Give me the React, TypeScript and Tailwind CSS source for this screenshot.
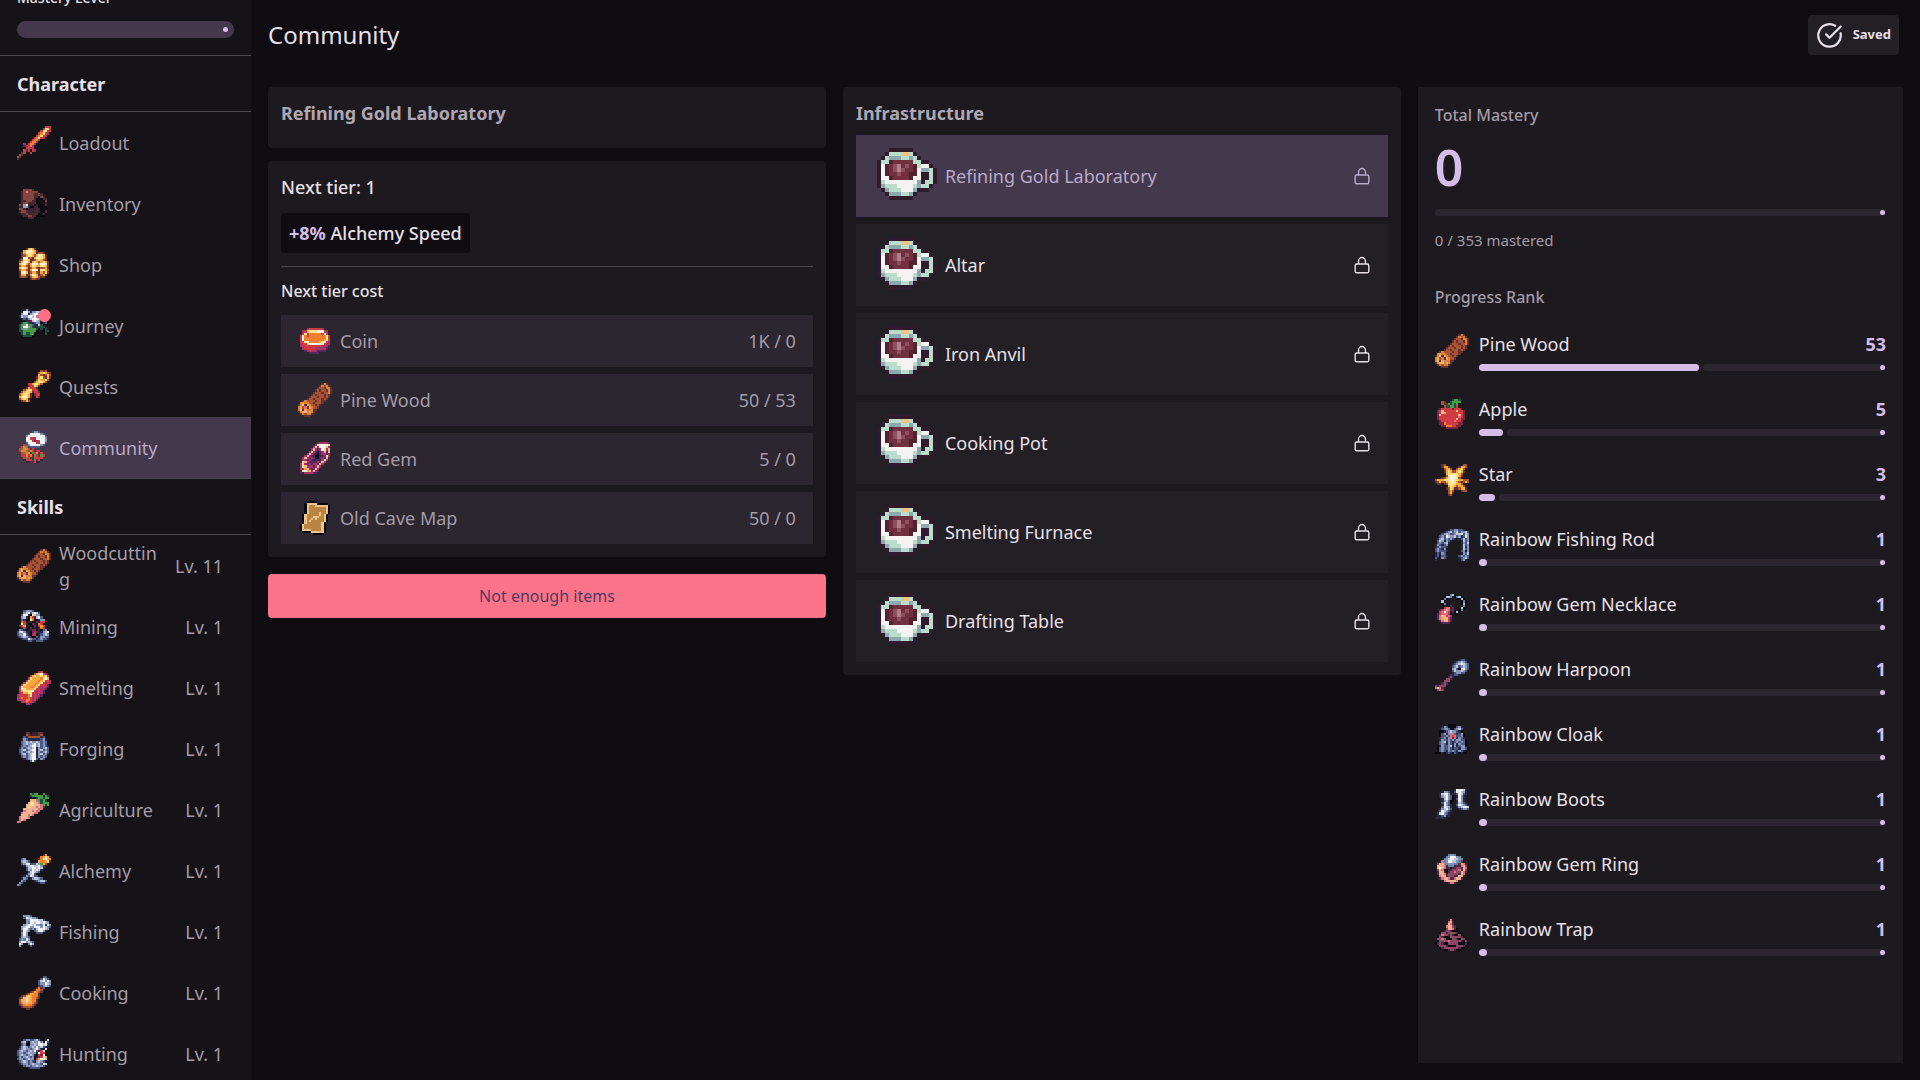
import React, { useState } from "react";
import { CircleCheckBig } from "lucide-react";
import { clsx } from "clsx";

// One character per pixel in the sprites below, "." is transparent
const PALETTE: Record<string, string> = {
  k: "#0b0812", d: "#3a2234", n: "#252a48", b: "#4b5884", s: "#8794ba", l: "#bcc6dd", w: "#f4f3f2",
  r: "#d23a41", R: "#7f2342", o: "#f08030", O: "#f6a93f", y: "#fde487", p: "#d9707f", P: "#f1b292",
  m: "#683034", t: "#a65530", T: "#d68338", g: "#479d41", G: "#1d5040", v: "#54265c", V: "#a5336b",
  c: "#a3cbd4", C: "#5b88a6", e: "#ecc588", E: "#b98540", a: "#b9dccb", A: "#8ea8b0", M: "#301b2c",
  q: "#70303f", Q: "#53222f", x: "#8f4f5e", X: "#b07f8f", u: "#8a4663", U: "#4d2844", h: "#84453f",
  H: "#4b2831",
};

const SPRITES: Record<string, string[]> = {
  sword: [
    ".............rrV", "............ryyr", "...........ryyrV", "..........royrV.", ".........royrV..", "........royrV...",
    ".......rooV.....", "......rooV......", "...V.rooV.......", "...vVroV........", "....rrVr........", "...tvr.rV.......",
    "..mt..r.........", ".tm.............", "tm..............", "m...............",
  ],
  bag: [
    "", "...hhhhH........", "..Hhphhhhh......", "..HhhhhhHHhH....", "..HhhhhhHHkhH...", "..HhhhhhHk.kHH..",
    "..HHhhhHHk..kh..", ".kHhhHHHHkk..H..", ".hHAwHdHkdkk.H..", ".HdAsnkkHdkk.k..", ".hhHkddddHdk.k..", ".HhhHdddHHd.kH..",
    "..HHhHHHHHk.Hk..", "...HHhhHHkkkk...", ".....HHHk.......",
  ],
  coins: [
    "....mOyOm.......", "...OywwyOm......", "..mOwyyyOmttm...", "..mtOyyOtOwyOm..", "..mwwttmOwyyOm..", ".mtyyOmmtOyOtm..",
    ".tOwwOmOyOtOyOm.", ".OywOtOwwyOwwym.", ".tOOtmOyyOOyyOm.", ".OwyOmtOOtmttOm.", ".tOOtmOwwymyyOt.", ".mywOmtOOtmOtym.",
    ".mOOmmOwyOmtOm..", ".mttm.tOyOtmm...", "......mttmm.....",
  ],
  island: [
    "...nsn..........", "..nwwsnssll.....", "..swwnslwws.....", ".nlsswwlwpn.....", "...bnslwwwlsn...", "....ndRlwlsnnb..",
    "..GggGnnbss.nb..", ".GgswggbnnlG....", ".GgwwsgGnnGGG...", ".GgssggggG.GkG..", ".GGggggggk..kGG.", "..GgGGggk....G..",
    "...GGGGk........",
  ],
  scroll: [
    "...........tmt..", "..........tOyOtm", "..........OtmtOt", ".........mOytmOm", ".........tyOOyt.", "........tOyyOt..",
    ".....rrOyyOt....", ".....mrryOm.....", "....mOrrtm......", "...tOyyrrr......", "..tOyyOmrrm.....", ".tOyyOm.mrr.....",
    ".OywyOm..rm.....", ".tOyOm..........", "..mtOt..........",
  ],
  hall: [
    ".......bssb.....", ".....bwwwwwsb...", "....swwwwwwwwb..", "....wwrrVwwwws..", "....wwwrRVrwws..", "....bwwwwrVwwb..",
    "..mrbswwwwwsb...", ".mrogRbbbbb.....", ".rgoorGrm.......", ".roogrorGrr.....", ".mrgooGgroRrm...", "..rroroRgrRgr...",
    "..mrgrRGrrrrm...", "...nrrrGgRrn....", "....nnRRrnn.....",
  ],
  log: [
    "...........mTm..", "..........mTtTm.", ".........mttmTTm", "........mtmttmTm", ".......mtttmttTm", "......mtmtttmtm.",
    ".....mtttmttmtm.", "....mttmtttmtm..", "..mTttttmttmm...", ".TOTTttmtttm....", "mTPmOTttmtm.....", "TOtpmOTttm......",
    "TPmOpTTmm.......", "mTOPTOTm........", ".mTtTTm.........", "...mmm..........",
  ],
  ore: [
    "...bsssb........", "...slwblwlb.....", "..bwwnkylss.....", "..slnkOrnlwb....", "..bnkkyokknss...", "..orkdnkkRnrr...",
    "..yrnkkmnkork...", ".mrOknkkRkrOrn..", ".knrnkRknknork..", ".sbnknnRRknkbs..", "blwsnnkRVRnnslw.", "bsswbnkVrknbsls.",
    "nbslsbnkkbnssbb.", "..nbbwsbbnbsbbn.", "....nbbn.bbbn...",
  ],
  ingot: [
    "..........Vr....", "........rOywrV..", "......rOyOOyOyr.", ".....ryOOOOoywO.", "....ryOOOOoOyrrV", "...ryOOOOoOyrVrV",
    "..ryOOOOoOyrrVv.", ".VyOOOooOyrVrVv.", ".rwyOOOOyrrVVv..", ".rOyyyywrVrVv...", ".VrOOyyrrVrVv...", "VrrrroyVrVVv....",
    "VrorrorVrVv.....", "VVrroorVrv......", "..VrorrVv.......", "....VVv.........",
  ],
  armor: [
    "....mm.dddmm....", "....tmddddmt....", "...bnttttttnb...", "..nsbnnnnnnbsn..", "..bslslsslsbsb..", "..bslsslwslbsb..",
    "..bsbslwwslbsbn.", ".nsbslslwnsbslb.", ".bslbslwwnslbsb.", ".bsbslslwnsbslb.", ".nslbslwwnslbsn.", "..bsbslwwnsbsb..",
    "...nbslwwbnsb...", "......bwb.......",
  ],
  carrot: [
    "......gGgg..g...", "......Gggggg.gG.", ".........GggGgg.", "......PPPpgGgG..", ".....PyyPPpGggg.", "....PPyyPPPpgGg.",
    "....PyPPPpPpG...", "...PPPPPPPpp....", "...pPPPpPpp.....", "..pPPPPPpp......", "..PPPpPp........", ".pPPPp..........",
    ".pPp............", "pp..............",
  ],
  potion: [
    "............mo..", "...........oOyOm", "..bs......moywOo", "..slsb....OooOym", "..bswwbbblsgOt..", "...nslwwllwsm...",
    "....bllwwlwln...", "....blswlwln....", ".....blwlsb.....", "....nslwb.......", "...nsbwlbb......", "..nsb.nsllsb....",
    "..sb....nbsllb..", ".sb.......nbb...", "sb..............",
  ],
  fish: [
    "...sssb.........", "...bwllssb......", "....sswwwwllb...", "....sCwwlwwlwls.", "...slwwlwssCwnws", "..slwwsswwwswlsb",
    "..swwsbsblwwwls.", "..bwlC..bswwsn..", "..sws....bbb....", "..Cws...........", "..slsb..........", ".bsCws..........",
    ".swwslsb........", ".ws..Cws........", ".s....b.........",
  ],
  drumstick: [
    "............bb..", "...........bwsb.", "..........blwsws", "..........bsswls", "..........mbslsb", ".........momb...",
    "........moot....", "......mtOotm....", "....mtOOoom.....", "..mtOyOooom.....", ".mtPyPOootm.....", ".tOPyPOoom......",
    ".toPPOOotm......", ".mtoOootm.......", "..mttttm........", "....mm..........",
  ],
  shark: [
    "", "...bssbbslb..nl.", "..slnkslsswsnwb.", "..bskksslswwlwn.", ".nslsbslswslbn..", ".bslssbslwsnkw..",
    "bslsbslswbnrwk..", "bssbslsssnwrrk..", "bslsbslsnkrRwk..", "nsbslsbsknRrwO..", "bssbslsskrOwyl..", ".bslsbsbnslsb...",
    ".nbssbslsssbwl..", "...bssbsslssb...", ".....nbbbbb.....",
  ],
  coin: [
    "", "", "....VrrrrrrV....", "..VrPyyyywwwrV..", "..ryroooooorwr..", ".rworooooooooyr.",
    ".rwooooooooooyr.", ".rwoooooooooOyr.", ".rrywoooooOywrV.", ".VrrywwwwwwyrVV.", ".VrrrrrrrrrVVVv.", "..VrrrrrVVVVVv..",
    "...vVrVVVvvvv...", ".....vvvvv......",
  ],
  gem: [
    ".........vVVVVv.", "........Vywwwwy.", ".......VPVwwwPV.", "......VPVvVwyVP.", ".....VPVvnvVPvP.", "....VPVvnkvVVvV.",
    "...VPVvvkknvVyV.", "..VPVvVvnkvVvPv.", "..VVvVvnvvvVyV..", ".vyPVvvvvVvPV...", ".VyVvVvVVvPV....", ".VyPVVVvVPV.....",
    ".VVOPVvVPV......", ".vywOPVPVv......", ".v.VVVVvv.......",
  ],
  map: [
    "....kkkkk.......", "...kPeeeekkkkk..", "...keEEEeeeePek.", "...keEEEEEEEEek.", "...keEEEEEEEEek.", "...keEEEEEeEEek.",
    "..keEEEEEEeEek..", "..keEEEeeeEEek..", "..keEEeEeEEEek..", "..keEeEEEEEEek..", "..keEEEEEEEek...", ".keEEEEEEEEek...",
    ".keEEEEEEEEek...", ".kPeeeEEEEEek...", "..kkkkeeeePek...", ".......kkkkk....",
  ],
  mug: [
    "", "....MMMMMM......", "...MaaaeeaM.....", "..MaAAAaaAaM....", ".MaaQqqqqqaaMM..", ".MwQqxXqxqQawwM.",
    ".MwQqxXxqqQwAAaM", ".MwQqqxqqQQwMMaM", ".MwwQqqqqQwwMMaM", ".MawwwwwwwwAMaaM", ".MAaaawwwwaAaaM.", "..MAaaawwwAMMM..",
    "...MAAAaaAM.....", "....MMMMMM......",
  ],
  apple: [
    "........GggG....", "...tm..Ggggg....", "...tmmgGgGg.....", "....tmGggGr.....", "..Rrrrrrmrrr....", ".RrPrrrrrrPrrR..",
    ".RrPPrrrrrrrrR..", ".RPrrrrrrrrPrR..", ".RrrrrrrrrrprR..", ".RrrrrrrrrPrRR..", "..RrrrrrrprrR...", "..RRorrrrrrRR...",
    "...RRooorrRR....", ".....RRRRRR.....",
  ],
  star: [
    "...mt........tt.", "...mOOm....mOOt.", "....tOOt..tOyt..", "....mOyOttOyOm..", ".....OyyyyyOt...", ".....tywwwyOm...",
    "...mtOywwwyt....", "tOOOyyywwyyOOttt", "mtOttOyywyOtmtOt", ".mm.mtyyyyOOt...", "......OyyOtOOt..", ".....mtyOmmtOOm.",
    "......tOt...mtt.", "......tOm.......", "......mt........",
  ],
  rod: [
    "......nbbssbbn..", "....nbslbslbsslb", "...bslsbbsllwbls", "..bsbwlsslbsnbws", ".nslbsbsbn.nblbs", ".blsnsbn....nlbs",
    ".bsbsln.....nsbl", "nsbnbs......nlbs", "nbsbbn......nlns", "bsbns.......nlbs", "bsbbbn......bs.s", "nbnsb.......nsbl",
    "nb.bbn.....bsbsb", "bn.sb......nbslb", "n...........bsn.",
  ],
  necklace: [
    "......kCck......", "....kccC.kCck...", "...kCk....kkck..", "...ck.......kCk.", "...kCk......kck.", ".......v.....Ck.",
    "....rpp.v...ck..", "..vrpPpvv..kC...", "..rpwpr.vkck....", ".vrpppV..kk.....", ".vpPPrpV........", ".vpOPPrv........",
    "..vpPPrv........", "...vvvv.........",
  ],
  harpoon: [
    "...........nbbn.", ".........nbslsb.", "........nbslwlsb", "........bslbslsb", "........slbklwsb", "........blsslsb.",
    "........nbssbb..", ".......vnbbn....", "......vun.......", ".....uxv........", "....uxu.........", "...vxv..........",
    "uUuxu...........", "pPpv............", ".upu............",
  ],
  cloak: [
    "......kkkk......", "...nsbkkkkbsn...", "...bssbkkbslb...", "..kknbslssbnk...", "..kbsnpssrnbsk..", "..kbbsbprpbbsk..",
    "..nbsnspRpnsbn..", "..nsbbsbsbssbbk.", "..bslnsbnbsbsbk.", "..bsbnsbnsnsbbk.", ".knsbbslnsnbssk.", ".kbsbbsbnbbnssbk",
    ".kbsbnsbsbnsbnk", "kkknknbnkbnknkk.",
  ],
  boots: [
    ".........nwwwln.", "...nssb..bwwlsn.", "..nlwwsnnnbwlbn.", "..nslwsbk.nwsn..", "...nlwsbk.bwsn..", "...nslbkk.nwsn..",
    "...bwsbk..nlsbn.", "...nwsbn..bwlsbn", "...bwlsn..nslwwl", "..nslwsb...nbssb", "..bwlsbn........", ".nlwsbn.........",
    ".nnbsnn.........", "nnnnn...........",
  ],
  ring: [
    "......CssC......", ".....CswwwsC....", "....CslwwllsC...", "...pCswwllsCm...", ".uPPpCsssCCmPpU.", ".PPPpUCCCUUUpPu.",
    ".PwPpUUkUUuuUPp.", ".uPpkkUUuuupUPu.", ".UPPUkUuupuuPpU.", ".UPPpUuuuuuUPp..", "..pPPUuuuUUPPU..", "..UpPPpUUpPPU...",
    "....pPPPPPp.....", "......UppU......",
  ],
  trap: [
    ".......p........", "......pPU.......", "......PpU.......", ".....pPPuU......", "....kuPPpUk.....", "....UuuUkkk.....",
    "..kxuUuxxuUk....", "..UpxuUuUkkxk...", ".kuUkkkxxuuuUk..", ".uxpxkkkuuUkxuk.", ".kuuxxpuuuuuUku.", "kUuUkkuuuuukkkUk",
    ".kuuuUkkkkuuuUk.", "..kUuxxuuuuUkk..", "....kkUuuUkk....",
  ],
};

function Sprite({ name, className }: { name: string; className?: string }) {
  return (
    <svg viewBox="0 0 16 16" shapeRendering="crispEdges" aria-hidden="true" className={clsx("shrink-0", className ?? "size-[34px]")}>
      {SPRITES[name].map((row, y) =>
        row.split("").map((c, x) => (c === "." ? null : <rect key={`${x}-${y}`} x={x} y={y} width={1} height={1} fill={PALETTE[c]} />)),
      )}
    </svg>
  );
}

function LockIcon() {
  return (
    <svg viewBox="0 0 18 18" fill="none" stroke="currentColor" strokeWidth={1.4} strokeLinejoin="round" aria-hidden="true" className="size-[18px] shrink-0">
      <rect x={2.2} y={8} width={13.6} height={8.8} rx={1.4} />
      <path d="M5.5 8V5.4a3.5 3.9 0 0 1 7 0V8" />
    </svg>
  );
}

const CHARACTER = [
  { label: "Loadout",   icon: "sword" },
  { label: "Inventory", icon: "bag" },
  { label: "Shop",      icon: "coins" },
  { label: "Journey",   icon: "island", badge: true },
  { label: "Quests",    icon: "scroll" },
  { label: "Community", icon: "hall" },
];

const SKILLS = [
  { label: "Woodcutting", icon: "log",       level: 11 },
  { label: "Mining",      icon: "ore",       level: 1 },
  { label: "Smelting",    icon: "ingot",     level: 1 },
  { label: "Forging",     icon: "armor",     level: 1 },
  { label: "Agriculture", icon: "carrot",    level: 1 },
  { label: "Alchemy",     icon: "potion",    level: 1 },
  { label: "Fishing",     icon: "fish",      level: 1 },
  { label: "Cooking",     icon: "drumstick", level: 1 },
  { label: "Hunting",     icon: "shark",     level: 1 },
];

const COSTS = [
  { label: "Coin",         icon: "coin", amount: "1K / 0" },
  { label: "Pine Wood",    icon: "log",  amount: "50 / 53" },
  { label: "Red Gem",      icon: "gem",  amount: "5 / 0" },
  { label: "Old Cave Map", icon: "map",  amount: "50 / 0" },
];

const BUILDINGS = ["Refining Gold Laboratory", "Altar", "Iron Anvil", "Cooking Pot", "Smelting Furnace", "Drafting Table"];

const RANKS = [
  { label: "Pine Wood",            icon: "log",      value: 53 },
  { label: "Apple",                icon: "apple",    value: 5 },
  { label: "Star",                 icon: "star",     value: 3 },
  { label: "Rainbow Fishing Rod",  icon: "rod",      value: 1 },
  { label: "Rainbow Gem Necklace", icon: "necklace", value: 1 },
  { label: "Rainbow Harpoon",      icon: "harpoon",  value: 1 },
  { label: "Rainbow Cloak",        icon: "cloak",    value: 1 },
  { label: "Rainbow Boots",        icon: "boots",    value: 1 },
  { label: "Rainbow Gem Ring",     icon: "ring",     value: 1 },
  { label: "Rainbow Trap",         icon: "trap",     value: 1 },
];

function ProgressBar({ value, label }: { value: number; label: string }) {
  return (
    <div role="progressbar" aria-label={label} aria-valuenow={value} aria-valuemin={0} aria-valuemax={100}
      className={clsx("flex h-[7px] w-full", value > 1 && "gap-1")}>
      {value > 0 && <div className="shrink-0 rounded-full bg-[#d5bdea]" style={{ width: `calc(${value}% + 4px)` }} />}
      <div className={clsx("flex flex-1 items-center justify-end bg-[#2b2630] pr-px", value === 1 ? "rounded-r-full" : "rounded-full")}>
        <span className="size-[5px] rounded-full bg-[#d5bdea]" />
      </div>
    </div>
  );
}

function NavRow({ label, icon, level, badge, active }: { label: string; icon: string; level?: number; badge?: boolean; active?: boolean }) {
  return (
    <li>
      <a href="#" aria-current={active ? "page" : undefined}
        className={clsx("flex h-[61px] items-center gap-2 pl-[17px] pr-7 text-lg leading-[26px]",
          active ? "bg-[#43384c] text-[#b9a9c9]" : "text-[#a39ca7]")}>
        <span className="relative shrink-0">
          <Sprite name={icon} />
          {badge && <span className="absolute right-0 top-0 size-[13px] rounded-full bg-[#ff7085]" />}
        </span>
        <span className="min-w-0 flex-1 break-all">{label}</span>
        {level !== undefined && <span className="ml-1 whitespace-nowrap">Lv. {level}</span>}
      </a>
    </li>
  );
}

export default function App() {
  const [selected, setSelected] = useState(BUILDINGS[0]);

  return (
    <div className="flex min-h-screen bg-[#0f0d12] font-['Noto_Sans',sans-serif] text-[#e8e0e8]">

      {/* Sidebar */}
      <aside className="sticky top-0 h-screen w-[251px] shrink-0 overflow-hidden bg-[#161318]">
        <div className="-mt-3 border-b border-[#4a464d] px-[17px] pb-[17px]">
          <p className="mb-[13px] text-sm font-medium leading-5">Mastery Level</p>
          <div role="progressbar" aria-label="Mastery Level" aria-valuenow={0} className="flex h-[17px] items-center justify-end rounded-full bg-[#43384c] pr-[6px]">
            <span className="size-[5px] rounded-full bg-[#d5bdea]" />
          </div>
        </div>
        <nav>
          <h2 className="flex h-14 items-center border-b border-[#4a464d] px-[17px] text-lg font-bold">Character</h2>
          <ul>
            {CHARACTER.map(item => <NavRow key={item.label} {...item} active={item.label === "Community"} />)}
          </ul>
          <h2 className="flex h-[57px] items-center border-y border-[#4a464d] px-[17px] text-lg font-bold">Skills</h2>
          <ul>
            {SKILLS.map(item => <NavRow key={item.label} {...item} />)}
          </ul>
        </nav>
      </aside>

      <main className="flex min-w-0 flex-1 flex-col px-[17px] pb-[17px]">
        <header className="flex h-[87px] items-start justify-between pr-1 pt-[15px]">
          <h1 className="text-2xl leading-10">Community</h1>
          <button className="flex h-10 items-center gap-[10px] rounded bg-[#221f25] px-2 text-[13px] font-bold">
            <CircleCheckBig size={27} strokeWidth={2} />
            Saved
          </button>
        </header>

        <div className="grid flex-1 grid-cols-[23fr_23fr_20fr] gap-[17px]">

          {/* Selected building */}
          <div>
            <section className="mb-[13px] rounded bg-[#1d1a1f] px-[13px] pb-[22px] pt-[13px]">
              <h2 className="text-lg font-bold leading-[26px] text-[#aea6b1]">{selected}</h2>
            </section>

            <section className="mb-[17px] rounded bg-[#1d1a1f] p-[13px]">
              <h3 className="mb-3 text-lg font-medium leading-[27px]">Next tier: 1</h3>
              <p className="inline-block rounded bg-[#0f0d12] px-2 text-lg font-medium leading-10">
                <span className="font-bold text-[#d5bdea]">+8%</span> Alchemy Speed
              </p>
              <hr className="mb-3 mt-[13px] border-[#4a464d]" />
              <h3 className="mb-3 text-base font-medium leading-6">Next tier cost</h3>
              <ul className="flex flex-col gap-[7px]">
                {COSTS.map(c => (
                  <li key={c.label} className="flex h-[52px] items-center gap-2 bg-[#2b2630] px-[17px] text-lg text-[#a39ca7]">
                    <Sprite name={c.icon} />
                    <span className="flex-1">{c.label}</span>
                    <span>{c.amount}</span>
                  </li>
                ))}
              </ul>
            </section>

            <button className="h-11 w-full rounded bg-[#fb7388] text-base text-[#553a60]">Not enough items</button>
          </div>

          {/* Infrastructure */}
          <section className="self-start rounded bg-[#1d1a1f] p-[13px]">
            <h2 className="mb-[9px] text-lg font-bold leading-[26px] text-[#aea6b1]">Infrastructure</h2>
            <div className="flex flex-col gap-[7px]">
              {BUILDINGS.map(name => (
                <button key={name} onClick={() => setSelected(name)}
                  className={clsx("flex h-[82px] items-center gap-2 px-[17px] text-left text-lg",
                    name === selected ? "bg-[#43384c] text-[#b9a9c9]" : "bg-[#221f25] text-[#e8e0e8]")}>
                  <Sprite name="mug" className="size-16" />
                  <span className="flex-1">{name}</span>
                  <LockIcon />
                </button>
              ))}
            </div>
          </section>

          {/* Mastery */}
          <section className="bg-[#1d1a1f] px-[17px] py-4">
            <h2 className="text-base font-medium leading-6 text-[#a39ca7]">Total Mastery</h2>
            <p className="mb-[11px] mt-[10px] text-[50px] font-semibold leading-[61px] text-[#d5bdea]">0</p>
            <ProgressBar value={0} label="Total Mastery" />
            <p className="mt-[14px] text-[15px] leading-5 text-[#a39ca7]">0 / 353 mastered</p>
            <h2 className="mt-[35px] text-base font-medium leading-6 text-[#a39ca7]">Progress Rank</h2>
            <ul className="mt-[22px] flex flex-col gap-[25px]">
              {RANKS.map(r => (
                <li key={r.label} className="flex items-center gap-[10px]">
                  <Sprite name={r.icon} />
                  <div className="min-w-0 flex-1">
                    <div className="mb-[6px] flex justify-between text-lg leading-[27px]">
                      <span>{r.label}</span>
                      <span className="font-bold text-[#d5bdea]">{r.value}</span>
                    </div>
                    <ProgressBar value={r.value} label={r.label} />
                  </div>
                </li>
              ))}
            </ul>
          </section>

        </div>
      </main>
    </div>
  );
}
